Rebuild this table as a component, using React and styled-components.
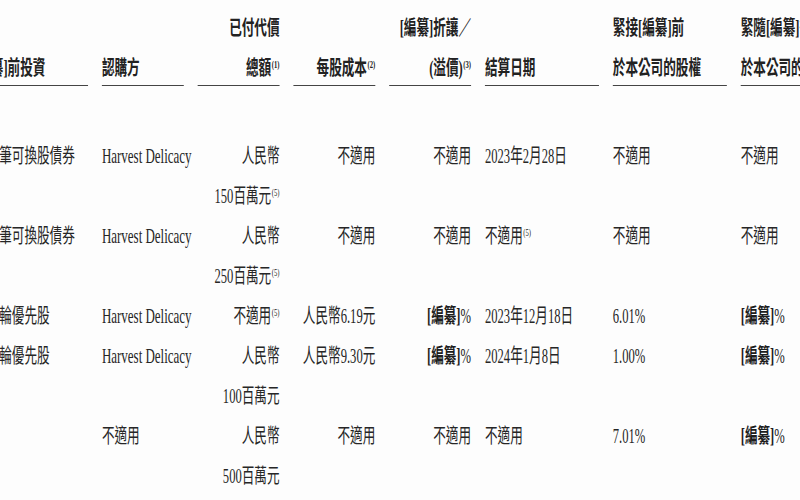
import React from "react";
import styled, { createGlobalStyle } from "styled-components";

const GlobalStyle = createGlobalStyle`
  html, body {
    margin: 0;
    padding: 0;
    background: #fdfdfd;
  }
`;

const Page = styled.div`
  width: 800px;
  height: 500px;
  overflow: hidden;
  background: #fdfdfd;
`;

// the scan is squeezed sideways, so the whole table is drawn wide and scaled
const Table = styled.div`
  width: 1398px;
  margin-left: -26px;
  transform: scaleX(0.63);
  transform-origin: 0 0;
  font-family: "Liberation Serif", "Noto Sans CJK TC", serif;
  font-size: 20px;
  color: #262626;
  white-space: nowrap;
`;

const Grid = styled.div`
  display: grid;
  grid-template-columns: 181px repeat(4, 130px) repeat(3, 181px);
  column-gap: 22px;
`;

const HeadCell = styled.div`
  display: flex;
  flex-direction: column;
  justify-content: flex-end;
  height: 75px;
  padding-top: 10px;
  text-align: ${({ $align }) => $align || "left"};
  font-weight: 700;
  color: #222;
  border-bottom: 1.5px solid #444;
`;

const HeadLine = styled.span`
  display: block;
  height: 38px;
  line-height: ${({ $low }) => ($low ? 42 : 38)}px;
`;

const Body = styled.div`
  margin-top: 50px;
`;

const Row = styled(Grid)`
  line-height: 40px;
`;

const Cell = styled.div`
  text-align: ${({ $align }) => $align || "left"};
`;

const Line = styled.span`
  display: block;
  height: 40px;
`;

const Latin = styled.span`
  font-size: 20.6px;
`;

const Sup = styled.sup`
  font-size: 10.5px;
  line-height: 0;
  vertical-align: 7px;
  margin-left: 1px;
`;

const Red = styled.span`
  font-weight: 700;
  color: #1e1e1e;
`;

const Txt = ({ t }) => {
  // "[編纂]" is printed bold, "^n" becomes a footnote mark
  const parts = t.split(/(\[編纂\]|\^\d|Harvest Delicacy)/);
  return parts.map((p, i) => {
    if (p === "[編纂]") return <Red key={i}>[編纂]</Red>;
    if (p === "Harvest Delicacy") return <Latin key={i}>{p}</Latin>;
    if (/^\^\d$/.test(p)) return <Sup key={i}>({p[1]})</Sup>;
    return <React.Fragment key={i}>{p}</React.Fragment>;
  });
};

const align = ["left", "left", "right", "right", "right", "left", "left", "left"];

const head = [
  ["", "[編纂]前投資"],
  ["", "認購方"],
  ["已付代價", "總額^1"],
  ["", "每股成本^2"],
  ["[編纂]折讓／", "(溢價)^3"],
  ["", "結算日期"],
  ["緊接[編纂]前", "於本公司的股權"],
  ["緊隨[編纂]後", "於本公司的股權"],
];

const rows = [
  ["第一筆可換股債券", "Harvest Delicacy", ["人民幣", "150百萬元^5"], "不適用", "不適用", "2023年2月28日", "不適用", "不適用"],
  ["第二筆可換股債券", "Harvest Delicacy", ["人民幣", "250百萬元^5"], "不適用", "不適用", "不適用^5", "不適用", "不適用"],
  ["第一輪優先股", "Harvest Delicacy", "不適用^5", "人民幣6.19元", "[編纂]%", "2023年12月18日", "6.01%", "[編纂]%"],
  ["第二輪優先股", "Harvest Delicacy", ["人民幣", "100百萬元"], "人民幣9.30元", "[編纂]%", "2024年1月8日", "1.00%", "[編纂]%"],
  ["", "不適用", ["人民幣", "500百萬元"], "不適用", "不適用", "不適用", "7.01%", "[編纂]%"],
];

const App = () => {
  return (
    <Page>
      <GlobalStyle />
      <Table>
        <Grid>
          {head.map((lines, c) => (
            <HeadCell key={c} $align={align[c]}>
              {lines.map((l, i) => (
                <HeadLine key={i} $low={i === 1}>
                  <Txt t={l} />
                </HeadLine>
              ))}
            </HeadCell>
          ))}
        </Grid>
        <Body>
          {rows.map((row, r) => (
            <Row key={r}>
              {row.map((v, c) => (
                <Cell key={c} $align={align[c]}>
                  {(Array.isArray(v) ? v : [v]).map((l, i) => (
                    <Line key={i}>
                      <Txt t={l} />
                    </Line>
                  ))}
                </Cell>
              ))}
            </Row>
          ))}
        </Body>
      </Table>
    </Page>
  );
};

export default App;
